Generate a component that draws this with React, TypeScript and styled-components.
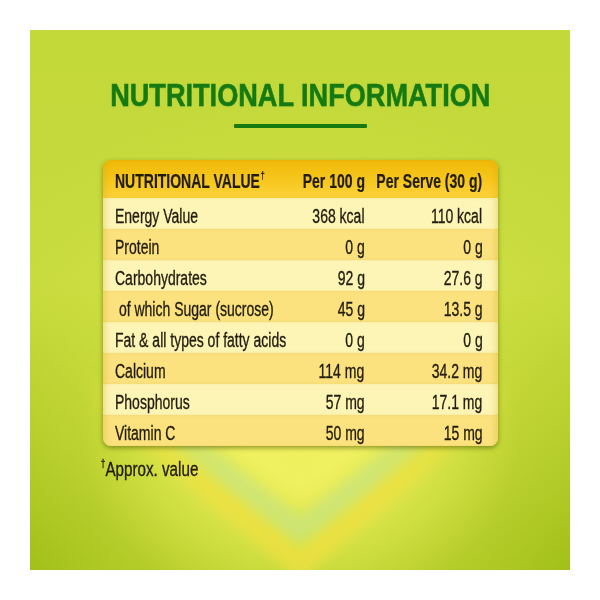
import React from "react";
import styled, { createGlobalStyle } from "styled-components";

const Global = createGlobalStyle`
  html, body { margin: 0; padding: 0; background: #ffffff; }
  body { font-family: "Liberation Sans", Arial, sans-serif; }
`;

const Page = styled.div`
  width: 600px;
  height: 600px;
  padding: 30px;
  box-sizing: border-box;
  background: #ffffff;
`;

const Panel = styled.main`
  position: relative;
  width: 540px;
  height: 540px;
  overflow: hidden;
  background:
    radial-gradient(ellipse 220px 170px at 50% 76%, rgba(242, 242, 96, 1), rgba(242, 242, 96, 0) 100%),
    radial-gradient(ellipse 360px 300px at 50% 68%, rgba(218, 232, 74, 0.9), rgba(218, 232, 74, 0) 100%),
    radial-gradient(ellipse 300px 280px at 0% 100%, rgba(158, 188, 22, 0.95), rgba(158, 188, 22, 0) 100%),
    radial-gradient(ellipse 300px 280px at 100% 100%, rgba(158, 188, 22, 0.95), rgba(158, 188, 22, 0) 100%),
    linear-gradient(180deg, #c3d839 0%, #c6da3d 45%, #b4cc28 100%);
`;

const Deco = styled.svg`
  position: absolute;
  inset: 0;
  width: 100%;
  height: 100%;
  pointer-events: none;
`;

const Content = styled.div`
  position: relative;
  z-index: 1;
  display: flex;
  flex-direction: column;
  align-items: center;
  padding-top: 50px;
`;

const Title = styled.h1`
  margin: 0;
  font-size: 31px;
  line-height: 31px;
  font-weight: 700;
  color: #177a10;
  white-space: nowrap;
  transform: scaleX(0.875);
  -webkit-text-stroke: 0.6px #177a10;
  text-shadow: 0 0 1px #dcee70, 0 0 2px #b2d646, 0 1px 1px #9cc43a;
`;

const Rule = styled.div`
  width: 133px;
  height: 4px;
  margin-top: 13px;
  background: #177a10;
  border-radius: 1px;
`;

const Table = styled.section`
  width: 395px;
  margin-top: 32px;
  border-radius: 8px;
  overflow: hidden;
  box-shadow: 0 2px 5px rgba(70, 80, 0, 0.55);
`;

const Row = styled.div<{ $tone: "head" | "light" | "dark" }>`
  display: grid;
  grid-template-columns: minmax(0, 1fr) 90px 118px;
  box-sizing: border-box;
  height: ${(p) => (p.$tone === "head" ? "38px" : "31px")};
  padding: ${(p) => (p.$tone === "head" ? "9px 15px 4px 12px" : "6px 15px 0 12px")};
  line-height: 25px;
  font-size: 20px;
  font-weight: ${(p) => (p.$tone === "head" ? 700 : 400)};
  color: #211c0e;
  -webkit-text-stroke: ${(p) => (p.$tone === "head" ? "0.2px" : "0.35px")} #211c0e;
  background: ${(p) =>
    p.$tone === "head"
      ? "linear-gradient(180deg, #f0b908 0%, #f6c71e 55%, #fbd23a 100%)"
      : p.$tone === "light"
      ? "#fdf5b6"
      : "#fbe27e"};
  box-shadow: inset 6px 0 6px -4px rgba(200, 160, 0, 0.3), inset -6px 0 6px -4px rgba(200, 160, 0, 0.3);
`;

const Cell = styled.div<{ $align: "left" | "right" }>`
  display: flex;
  min-width: 0;
  white-space: nowrap;
  justify-content: ${(p) => (p.$align === "left" ? "flex-start" : "flex-end")};
`;

const Text = styled.span<{ $align: "left" | "right"; $scale?: number }>`
  display: inline-block;
  flex: none;
  white-space: nowrap;
  transform: scaleX(${(p) => p.$scale ?? 0.7});
  transform-origin: ${(p) => p.$align} center;
`;

const Dagger = styled.sup`
  font-size: 11px;
  line-height: 0;
  vertical-align: 9px;
  margin-left: 1px;
`;

const Foot = styled.div`
  width: 395px;
  margin-top: 11px;
  margin-left: -6px;
  font-size: 20px;
  line-height: 25px;
  color: #211c0e;
  -webkit-text-stroke: 0.35px #211c0e;
`;

const rows: [string, string, string][] = [
  ["Energy Value", "368 kcal", "110 kcal"],
  ["Protein", "0 g", "0 g"],
  ["Carbohydrates", "92 g", "27.6 g"],
  ["\u00a0of which Sugar (sucrose)", "45 g", "13.5 g"],
  ["Fat & all types of fatty acids", "0 g", "0 g"],
  ["Calcium", "114 mg", "34.2 mg"],
  ["Phosphorus", "57 mg", "17.1 mg"],
  ["Vitamin C", "50 mg", "15 mg"],
];

export default function App() {
  return (
    <>
      <Global />
      <Page>
        <Panel>
          <Deco viewBox="0 0 540 540" preserveAspectRatio="none">
            <defs>
              <filter id="soft" x="-20%" y="-20%" width="140%" height="140%">
                <feGaussianBlur stdDeviation="6" />
              </filter>
              <filter id="softer" x="-20%" y="-20%" width="140%" height="140%">
                <feGaussianBlur stdDeviation="9" />
              </filter>
              <linearGradient id="fadeArms" x1="0" y1="0" x2="1" y2="0">
                <stop offset="0" stopColor="#f0e040" stopOpacity="0" />
                <stop offset="0.3" stopColor="#f0e040" stopOpacity="1" />
                <stop offset="0.7" stopColor="#f0e040" stopOpacity="1" />
                <stop offset="1" stopColor="#f0e040" stopOpacity="0" />
              </linearGradient>
              <linearGradient id="fadeArms2" x1="0" y1="0" x2="1" y2="0">
                <stop offset="0" stopColor="#c8e482" stopOpacity="0" />
                <stop offset="0.3" stopColor="#c8e482" stopOpacity="1" />
                <stop offset="0.7" stopColor="#c8e482" stopOpacity="1" />
                <stop offset="1" stopColor="#c8e482" stopOpacity="0" />
              </linearGradient>
            </defs>
            <polyline points="50,350 270,534 490,350" fill="none" stroke="url(#fadeArms)" strokeWidth="24" opacity="0.75" filter="url(#soft)" />
            <polyline points="90,360 270,500 450,360" fill="none" stroke="url(#fadeArms2)" strokeWidth="22" opacity="0.7" filter="url(#soft)" />
            <polyline points="130,350 270,456 410,350" fill="none" stroke="#f4f268" strokeWidth="28" opacity="0.6" filter="url(#softer)" />
          </Deco>
          <Content>
            <Title>NUTRITIONAL INFORMATION</Title>
            <Rule />
            <Table>
              <Row $tone="head">
                <Cell $align="left">
                  <Text $align="left">
                    NUTRITIONAL VALUE<Dagger>†</Dagger>
                  </Text>
                </Cell>
                <Cell $align="right">
                  <Text $align="right">Per 100 g</Text>
                </Cell>
                <Cell $align="right">
                  <Text $align="right">Per Serve (30 g)</Text>
                </Cell>
              </Row>
              {rows.map(([label, a, b], i) => (
                <Row key={label} $tone={i % 2 === 0 ? "light" : "dark"}>
                  <Cell $align="left">
                    <Text $align="left">{label}</Text>
                  </Cell>
                  <Cell $align="right">
                    <Text $align="right">{a}</Text>
                  </Cell>
                  <Cell $align="right">
                    <Text $align="right">{b}</Text>
                  </Cell>
                </Row>
              ))}
            </Table>
            <Foot>
              <Text $align="left" $scale={0.76}>
                <Dagger>†</Dagger>Approx. value
              </Text>
            </Foot>
          </Content>
        </Panel>
      </Page>
    </>
  );
}
